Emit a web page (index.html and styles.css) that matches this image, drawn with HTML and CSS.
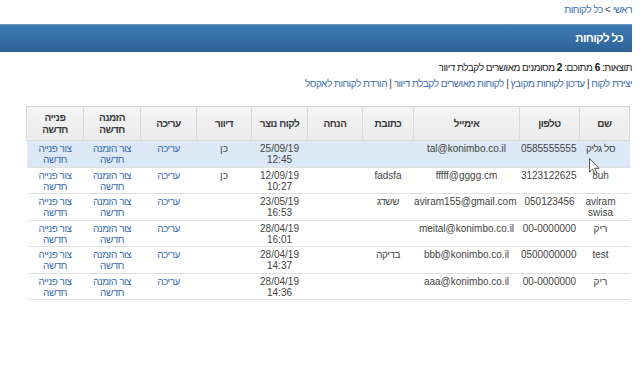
FILE: index.html
```html
<!DOCTYPE html>
<html lang="he" dir="rtl">
<head>
<meta charset="utf-8">
<title>כל לקוחות</title>
<link rel="stylesheet" href="styles.css">
</head>
<body>
<div class="page">
  <div class="crumbs"><a href="#">ראשי</a> &gt; <a href="#">כל לקוחות</a></div>
  <div class="titlebar">
    <h1>כל לקוחות</h1>
    <span class="stub"></span>
  </div>
  <div class="results">תוצאות: <b>6</b> מתוכם: <b>2</b> מסומנים מאושרים לקבלת דיוור</div>
  <div class="actions"><a href="#">יצירת לקוח</a> | <a href="#">עדכון לקוחות מקובץ</a> | <a href="#">לקוחות מאושרים לקבלת דיוור</a> | <a href="#">הורדת לקוחות לאקסל</a></div>
  <div class="tablewrap">
  <table class="grid">
    <colgroup>
      <col class="c-name"><col class="c-phone"><col class="c-mail"><col class="c-addr"><col class="c-disc"><col class="c-date"><col class="c-news"><col class="c-edit"><col class="c-order"><col class="c-ticket">
    </colgroup>
    <thead>
      <tr><th>שם</th><th>טלפון</th><th>אימייל</th><th>כתובת</th><th>הנחה</th><th>לקוח נוצר</th><th>דיוור</th><th>עריכה</th><th>הזמנה<br>חדשה</th><th>פנייה<br>חדשה</th></tr>
    </thead>
    <tbody>
      <tr class="hover"><td>סל גליק</td><td class="lt">0585555555</td><td class="lt">tal@konimbo.co.il</td><td></td><td></td><td class="lt">25/09/19<br>12:45</td><td class="lt">כן</td><td><a href="#">עריכה</a></td><td><a href="#">צור הזמנה<br>חדשה</a></td><td><a href="#">צור פנייה<br>חדשה</a></td></tr>
      <tr><td class="lt">8uh</td><td class="lt">3123122625</td><td class="lt">fffff@gggg.cm</td><td class="lt">fadsfa</td><td></td><td class="lt">12/09/19<br>10:27</td><td class="lt">כן</td><td><a href="#">עריכה</a></td><td><a href="#">צור הזמנה<br>חדשה</a></td><td><a href="#">צור פנייה<br>חדשה</a></td></tr>
      <tr><td class="lt">aviram<br>swisa</td><td class="lt">050123456</td><td class="lt">aviram155@gmail.com</td><td>ששדג</td><td></td><td class="lt">23/05/19<br>16:53</td><td></td><td><a href="#">עריכה</a></td><td><a href="#">צור הזמנה<br>חדשה</a></td><td><a href="#">צור פנייה<br>חדשה</a></td></tr>
      <tr><td class="lt">ריק</td><td class="lt">00-0000000</td><td class="lt">meital@konimbo.co.il</td><td></td><td></td><td class="lt">28/04/19<br>16:01</td><td></td><td><a href="#">עריכה</a></td><td><a href="#">צור הזמנה<br>חדשה</a></td><td><a href="#">צור פנייה<br>חדשה</a></td></tr>
      <tr><td class="lt">test</td><td class="lt">0500000000</td><td class="lt">bbb@konimbo.co.il</td><td>בדיקה</td><td></td><td class="lt">28/04/19<br>14:37</td><td></td><td><a href="#">עריכה</a></td><td><a href="#">צור הזמנה<br>חדשה</a></td><td><a href="#">צור פנייה<br>חדשה</a></td></tr>
      <tr><td class="lt">ריק</td><td class="lt">00-0000000</td><td class="lt">aaa@konimbo.co.il</td><td></td><td></td><td class="lt">28/04/19<br>14:36</td><td></td><td><a href="#">עריכה</a></td><td><a href="#">צור הזמנה<br>חדשה</a></td><td><a href="#">צור פנייה<br>חדשה</a></td></tr>
    </tbody>
  </table>
  <svg class="cursor" width="12" height="18" viewBox="0 0 12 18"><path d="M0.5 0.5 L0.5 14 L3.6 11 L6 16.6 L8 15.7 L5.7 10.3 L10 10.3 Z" fill="#fff" stroke="#555" stroke-width="1"/></svg>
  </div>
</div>
</body>
</html>
```
FILE: styles.css
```css
html, body {
  margin: 0;
  padding: 0;
  background: #fff;
}
body {
  font-family: "Liberation Sans", Arial, sans-serif;
  font-size: 10px;
  letter-spacing: -0.5px;
  color: #333;
}
a {
  color: #3a6db0;
  text-decoration: none;
}
.page {
  margin-right: 8px;
}
.crumbs {
  padding-top: 3px;
  height: 21px;
  line-height: 14px;
  color: #444;
}
.titlebar {
  position: relative;
  height: 28px;
  margin-left: -8px;
  box-sizing: border-box;
  background: linear-gradient(#3f7ab3, #2f6398);
  border-top: 1px solid #6a95c2;
  border-bottom: 1px solid #2b5a8a;
  display: flex;
  align-items: center;
  padding-right: 9px;
}
.titlebar h1 {
  margin: 0;
  font-size: 11.5px;
  letter-spacing: -0.6px;
  font-weight: bold;
  color: #fff;
  line-height: 16px;
}
.stub {
  position: absolute;
  left: 0;
  top: 4px;
  width: 5px;
  height: 18px;
  background: #fff;
}
.results {
  margin-top: 9px;
  line-height: 14px;
  color: #222;
}
.results b {
  font-weight: bold;
  color: #111;
}
.actions {
  margin-top: 2px;
  line-height: 14px;
  color: #333;
}
.tablewrap {
  position: relative;
  margin-top: 15px;
  display: flex;
  justify-content: flex-start;
  padding-right: 2px;
}
.grid {
  width: 603px;
  table-layout: fixed;
  border-collapse: collapse;
}
.c-name { width: 50px; }
.c-phone { width: 60px; }
.c-mail { width: 106px; }
.c-addr { width: 51px; }
.c-disc { width: 55px; }
.c-date { width: 56px; }
.c-news { width: 55px; }
.c-edit { width: 56px; }
.c-order { width: 57px; }
.c-ticket { width: 57px; }
.grid th {
  background: linear-gradient(#f4f4f4, #ebebeb);
  border: 1px solid #dadada;
  height: 34px;
  box-sizing: border-box;
  padding: 4px 3px;
  font-weight: bold;
  color: #3a3a3a;
  line-height: 12px;
  text-align: center;
  vertical-align: middle;
}
.grid td {
  border-bottom: 1px solid #e0e0e0;
  padding: 2px 3px 1.5px;
  height: 22px;
  line-height: 11px;
  text-align: center;
  vertical-align: top;
  color: #444;
  white-space: nowrap;
  overflow: hidden;
}
.grid td.lt {
  letter-spacing: 0;
}
.grid td:first-child {
  padding-right: 9px;
  padding-left: 1px;
}
.grid tr.hover td {
  background: #dce8f5;
}
.cursor {
  position: absolute;
  left: 589px;
  top: 52px;
}
```
